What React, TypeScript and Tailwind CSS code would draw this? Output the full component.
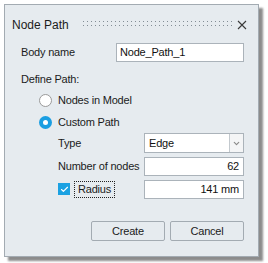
import { Check, ChevronDown } from 'lucide-react'

const font = { fontFamily: '"Liberation Sans", Arial, sans-serif' }

function Radio({ checked }: { checked?: boolean }) {
  if (checked) {
    return (
      <span className="flex h-[13px] w-[13px] items-center justify-center rounded-full bg-[#1a9ee2]">
        <span className="h-[5px] w-[5px] rounded-full bg-white" />
      </span>
    )
  }
  return <span className="h-[13px] w-[13px] rounded-full border border-[#9a9a9a] bg-white" />
}

function Field({ value, right }: { value: string; right?: boolean }) {
  return (
    <div
      className={`flex h-[19px] w-[100px] items-center border border-[#abb3ba] bg-white px-[4px] text-[#111] ${
        right ? 'justify-end' : ''
      }`}
    >
      {value}
    </div>
  )
}

export default function App() {
  return (
    <div className="h-[263px] w-[268px] bg-white pl-[4px] pt-[4px] text-[11px] tracking-[-0.2px] text-[#1b1b1b]" style={font}>
      <div className="flex h-[253px] w-[255px] flex-col border border-[#a3abb2] bg-[#e6ebef] shadow-[4px_4px_2px_rgba(0,0,0,0.45)]">
        {/* title bar */}
        <div className="mt-[7px] flex h-[26px] items-center pl-[7px] pr-[10px]">
          <span className="text-[12px] tracking-normal">Node Path</span>
          <svg width="150" height="8" className="ml-[14px]">
            <defs>
              <pattern id="dots" width="4" height="4" patternUnits="userSpaceOnUse">
                <rect x="0" y="0" width="1" height="1" fill="#838d95" />
              </pattern>
            </defs>
            <rect x="0" y="0" width="150" height="6" fill="url(#dots)" />
          </svg>
          <svg width="10" height="10" viewBox="0 0 10 10" className="ml-auto mr-[1px]">
            <path d="M1 1L9 9M9 1L1 9" stroke="#3a3a3a" strokeWidth="1.1" />
          </svg>
        </div>

        {/* body name */}
        <div className="mt-[4px] flex h-[20px] items-center pl-[16px]">
          <span>Body name</span>
          <div className="ml-auto mr-[14px] flex h-[19px] w-[128px] items-center border border-[#abb3ba] bg-white px-[3px] text-[#111]">
            Node_Path_1
          </div>
        </div>

        <div className="mt-[7px] flex h-[20px] items-center pl-[16px]">Define Path:</div>

        <div className="mt-[1px] flex h-[20px] items-center gap-[6px] pl-[34px]">
          <Radio />
          <span>Nodes in Model</span>
        </div>
        <div className="mt-[2px] flex h-[20px] items-center gap-[6px] pl-[34px]">
          <Radio checked />
          <span>Custom Path</span>
        </div>

        {/* type */}
        <div className="mt-[1px] flex h-[20px] items-center pl-[53px] pr-[14px]">
          <span>Type</span>
          <div className="ml-auto flex h-[20px] w-[100px] border border-[#abb3ba] bg-white">
            <span className="flex flex-1 items-center px-[4px] text-[#111]">Edge</span>
            <span className="flex w-[14px] items-center justify-center border-l border-[#c3c9ce] bg-[#f4f5f6]">
              <ChevronDown className="h-[9px] w-[9px] text-[#888]" strokeWidth={3} />
            </span>
          </div>
        </div>

        <div className="mt-[3px] flex h-[20px] items-center pl-[53px] pr-[14px]">
          <span>Number of nodes</span>
          <div className="ml-auto">
            <Field value="62" right />
          </div>
        </div>

        <div className="mt-[3px] flex h-[20px] items-center pl-[53px] pr-[14px]">
          <span className="flex h-[12px] w-[12px] items-center justify-center bg-[#1ba1e2]">
            <Check className="h-[9px] w-[9px] text-white" strokeWidth={3} />
          </span>
          <span className="ml-[4px] border border-dotted border-[#222] px-[3px] leading-[15px]">Radius</span>
          <div className="ml-auto">
            <Field value="141 mm" right />
          </div>
        </div>

        {/* buttons */}
        <div className="mt-[22px] flex h-[20px] justify-end gap-[5px] pr-[14px]">
          <button className="h-[20px] w-[74px] rounded-[2px] border border-[#a3abb2] bg-[#e6ebef] text-[11px] text-[#1b1b1b]">
            Create
          </button>
          <button className="h-[20px] w-[74px] rounded-[2px] border border-[#a3abb2] bg-[#e6ebef] text-[11px] text-[#1b1b1b]">
            Cancel
          </button>
        </div>
      </div>
    </div>
  )
}
